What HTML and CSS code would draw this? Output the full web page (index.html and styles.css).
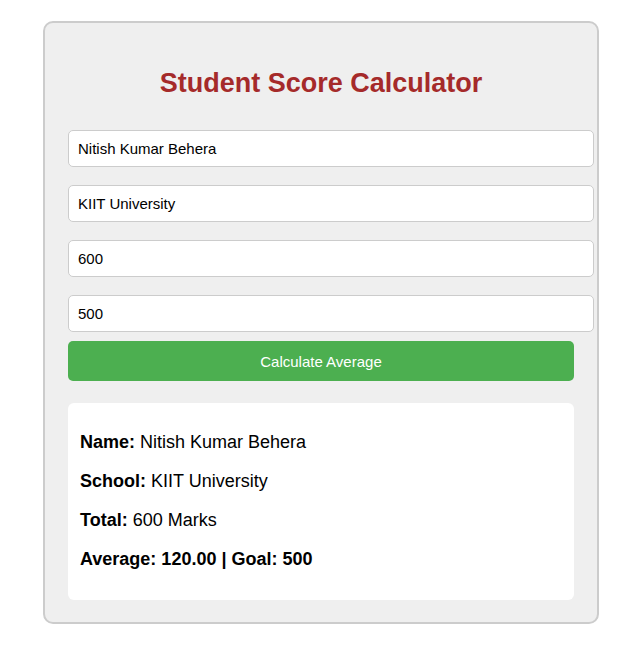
FILE: index.html
```html
<!DOCTYPE html>
<html lang="en">
<head>
<meta charset="utf-8">
<title>Student Score Calculator</title>
<link rel="stylesheet" href="styles.css">
</head>
<body>
<div class="card">
  <h2 class="title">Student Score Calculator</h2>
  <div class="form">
    <input class="field" type="text" value="Nitish Kumar Behera">
    <input class="field" type="text" value="KIIT University">
    <input class="field" type="text" value="600">
    <input class="field field-last" type="text" value="500">
    <button class="btn" type="button">Calculate Average</button>
  </div>
  <div class="result">
    <p class="line"><strong>Name:</strong> Nitish Kumar Behera</p>
    <p class="line"><strong>School:</strong> KIIT University</p>
    <p class="line"><strong>Total:</strong> 600 Marks</p>
    <p class="line"><strong>Average: 120.00 | Goal: 500</strong></p>
  </div>
</div>
</body>
</html>
```
FILE: styles.css
```css
html, body {
  margin: 0;
  padding: 0;
  background: #ffffff;
  font-family: "Liberation Sans", Arial, sans-serif;
}

body {
  padding: 21px 0 0 43px;
}

.card {
  width: 506px;
  padding: 23px 23px 22px;
  background: #efefef;
  border: 2px solid #cccccc;
  border-radius: 10px;
}

.title {
  margin: 22px 0 31px;
  text-align: center;
  color: #a52a2a;
  font-size: 27px;
  font-weight: bold;
  line-height: 31px;
}

.form {
  display: flex;
  flex-direction: column;
  align-items: flex-start;
}

.field {
  box-sizing: border-box;
  width: calc(100% + 20px);
  height: 37px;
  margin: 0 0 18px;
  padding: 0 9px;
  border: 1px solid #cccccc;
  border-radius: 5px;
  background: #ffffff;
  font-family: "Liberation Sans", Arial, sans-serif;
  font-size: 15px;
  color: #000000;
}

.field-last {
  margin-bottom: 9px;
}

.btn {
  width: 100%;
  height: 40px;
  border: none;
  border-radius: 5px;
  background: #4caf50;
  color: #ffffff;
  font-family: "Liberation Sans", Arial, sans-serif;
  font-size: 15px;
  padding: 0;
}

.result {
  margin-top: 22px;
  padding: 11px 12px 12px;
  background: #ffffff;
  border-radius: 6px;
}

.line {
  margin: 18px 0;
  font-size: 18px;
  line-height: 21px;
  color: #000000;
}
```
